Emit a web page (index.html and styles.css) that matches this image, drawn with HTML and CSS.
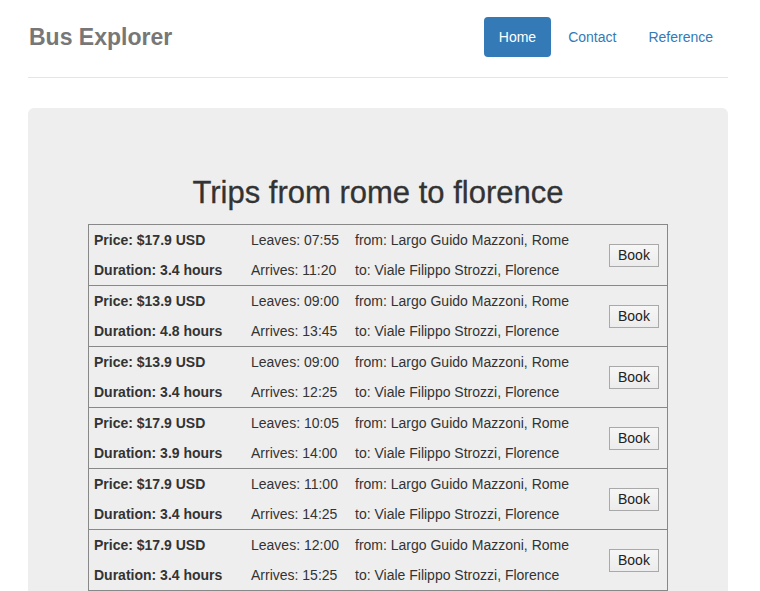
FILE: index.html
```html
<!DOCTYPE html>
<html>
<head>
<meta charset="utf-8">
<title>Bus Explorer</title>
<link rel="stylesheet" href="styles.css">
</head>
<body>
<div class="container">
  <header class="header">
    <h3 class="brand">Bus Explorer</h3>
    <nav class="nav">
      <a class="pill active" href="#">Home</a>
      <a class="pill" href="#">Contact</a>
      <a class="pill" href="#">Reference</a>
    </nav>
  </header>
  <section class="jumbotron">
    <h1 class="title">Trips from rome to florence</h1>
    <div class="trips">
      <div class="trip">
        <div class="c1"><b>Price: $17.9 USD</b></div>
        <div class="c2">Leaves: 07:55</div>
        <div class="c3">from: Largo Guido Mazzoni, Rome</div>
        <div class="c4"><button class="book">Book</button></div>
        <div class="c1"><b>Duration: 3.4 hours</b></div>
        <div class="c2">Arrives: 11:20</div>
        <div class="c3">to: Viale Filippo Strozzi, Florence</div>
      </div>
      <div class="trip">
        <div class="c1"><b>Price: $13.9 USD</b></div>
        <div class="c2">Leaves: 09:00</div>
        <div class="c3">from: Largo Guido Mazzoni, Rome</div>
        <div class="c4"><button class="book">Book</button></div>
        <div class="c1"><b>Duration: 4.8 hours</b></div>
        <div class="c2">Arrives: 13:45</div>
        <div class="c3">to: Viale Filippo Strozzi, Florence</div>
      </div>
      <div class="trip">
        <div class="c1"><b>Price: $13.9 USD</b></div>
        <div class="c2">Leaves: 09:00</div>
        <div class="c3">from: Largo Guido Mazzoni, Rome</div>
        <div class="c4"><button class="book">Book</button></div>
        <div class="c1"><b>Duration: 3.4 hours</b></div>
        <div class="c2">Arrives: 12:25</div>
        <div class="c3">to: Viale Filippo Strozzi, Florence</div>
      </div>
      <div class="trip">
        <div class="c1"><b>Price: $17.9 USD</b></div>
        <div class="c2">Leaves: 10:05</div>
        <div class="c3">from: Largo Guido Mazzoni, Rome</div>
        <div class="c4"><button class="book">Book</button></div>
        <div class="c1"><b>Duration: 3.9 hours</b></div>
        <div class="c2">Arrives: 14:00</div>
        <div class="c3">to: Viale Filippo Strozzi, Florence</div>
      </div>
      <div class="trip">
        <div class="c1"><b>Price: $17.9 USD</b></div>
        <div class="c2">Leaves: 11:00</div>
        <div class="c3">from: Largo Guido Mazzoni, Rome</div>
        <div class="c4"><button class="book">Book</button></div>
        <div class="c1"><b>Duration: 3.4 hours</b></div>
        <div class="c2">Arrives: 14:25</div>
        <div class="c3">to: Viale Filippo Strozzi, Florence</div>
      </div>
      <div class="trip">
        <div class="c1"><b>Price: $17.9 USD</b></div>
        <div class="c2">Leaves: 12:00</div>
        <div class="c3">from: Largo Guido Mazzoni, Rome</div>
        <div class="c4"><button class="book">Book</button></div>
        <div class="c1"><b>Duration: 3.4 hours</b></div>
        <div class="c2">Arrives: 15:25</div>
        <div class="c3">to: Viale Filippo Strozzi, Florence</div>
      </div>
    </div>
  </section>
</div>
</body>
</html>
```

FILE: styles.css
```css
html, body {
  margin: 0;
  padding: 0;
}
body {
  font-family: "Liberation Sans", Arial, Helvetica, sans-serif;
  font-size: 14px;
  line-height: 1.42857;
  color: #333;
  background: #fff;
  padding-top: 17px;
}
.container {
  width: 700px;
  margin-left: 28px;
}
.header {
  display: flex;
  justify-content: space-between;
  align-items: center;
  padding-bottom: 20px;
  border-bottom: 1px solid #e5e5e5;
}
.brand {
  margin: 0;
  padding-left: 1px;
  font-size: 23px;
  font-weight: bold;
  line-height: 40px;
  color: #777;
}
.nav {
  display: flex;
  gap: 2px;
}
.pill {
  display: block;
  padding: 10px 15px;
  line-height: 20px;
  color: #337ab7;
  text-decoration: none;
  border-radius: 4px;
}
.pill.active {
  background: #337ab7;
  color: #fff;
}
.jumbotron {
  margin-top: 30px;
  background: #eee;
  border-radius: 6px;
  padding: 68px 60px 30px;
  text-align: center;
}
.title {
  margin: 0 0 14px;
  font-size: 31px;
  font-weight: normal;
  line-height: 34px;
  color: #333;
  -webkit-text-stroke: 0.3px #333;
}
.trips {
  border: 1px solid #888;
  text-align: left;
}
.trip {
  display: grid;
  grid-template-columns: 157px 104px 1fr 63px;
  grid-template-rows: 31px 29px;
  align-items: center;
}
.trip + .trip {
  border-top: 1px solid #888;
}
.c1, .c2, .c3 {
  padding-left: 5px;
  white-space: nowrap;
}
.c4 {
  grid-column: 4;
  grid-row: 1 / span 2;
  padding-left: 5px;
}
.book {
  font-family: "Liberation Sans", Arial, Helvetica, sans-serif;
  font-size: 14px;
  line-height: 17px;
  padding: 2px 8px;
  color: #222;
  background: linear-gradient(#f6f6f6, #ececec);
  border: 1px solid #a9a9a9;
  border-radius: 0;
}
```
